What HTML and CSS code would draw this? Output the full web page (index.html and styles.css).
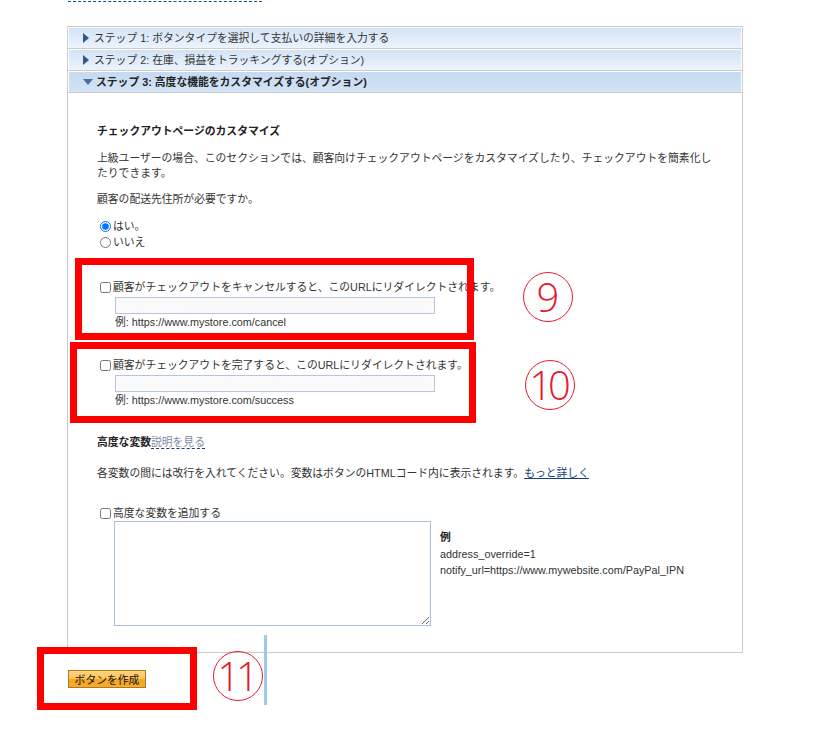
FILE: index.html
```html
<!DOCTYPE html>
<html lang="ja">
<head>
    <meta charset="UTF-8">
    <meta name="viewport" content="width=device-width, initial-scale=1.0">
    <title>ボタンの作成</title>
    <link rel="stylesheet" href="styles.css">
</head>
<body>
    <div class="page">
        <a href="#" class="top-link">保存済みのボタンを表示または編集する</a>

        <div class="accordion">
            <div class="step"><span class="arrow"></span>ステップ 1: ボタンタイプを選択して支払いの詳細を入力する</div>
            <div class="step"><span class="arrow"></span>ステップ 2: 在庫、損益をトラッキングする(オプション)</div>
            <div class="step open"><span class="arrow"></span>ステップ 3: 高度な機能をカスタマイズする(オプション)</div>

            <div class="panel">
                <h3 class="title">チェックアウトページのカスタマイズ</h3>
                <p class="text">上級ユーザーの場合、このセクションでは、顧客向けチェックアウトページをカスタマイズしたり、チェックアウトを簡素化したりできます。</p>
                <p class="text">顧客の配送先住所が必要ですか。</p>

                <div class="radios">
                    <label><input type="radio" name="ship" checked>はい。</label>
                    <label><input type="radio" name="ship">いいえ</label>
                </div>

                <div class="redirect">
                    <label><input type="checkbox">顧客がチェックアウトをキャンセルすると、このURLにリダイレクトされます。</label>
                    <input type="text" class="url">
                    <div class="hint">例: https://www.mystore.com/cancel</div>
                </div>

                <div class="redirect">
                    <label><input type="checkbox">顧客がチェックアウトを完了すると、このURLにリダイレクトされます。</label>
                    <input type="text" class="url">
                    <div class="hint">例: https://www.mystore.com/success</div>
                </div>

                <div class="vars-head"><strong>高度な変数</strong><a href="#" class="help">説明を見る</a></div>
                <p class="text vars-note">各変数の間には改行を入れてください。変数はボタンのHTMLコード内に表示されます。<a href="#" class="more">もっと詳しく</a></p>

                <label class="add-vars"><input type="checkbox">高度な変数を追加する</label>
                <div class="vars-row">
                    <textarea class="vars"></textarea>
                    <div class="vars-example">
                        <strong>例</strong>
                        <div>address_override=1</div>
                        <div>notify_url=https://www.mywebsite.com/PayPal_IPN</div>
                    </div>
                </div>
            </div>
        </div>

        <div class="actions">
            <button class="create">ボタンを作成</button>
        </div>

        <!-- annotations drawn over the screenshot -->
        <div class="mark mark-9"></div>
        <div class="mark mark-10"></div>
        <div class="mark mark-11"></div>
        <div class="num num-9">9</div>
        <div class="num num-10">10</div>
        <div class="num num-11">11</div>
        <div class="caret"></div>
    </div>
</body>
</html>
```

FILE: styles.css
```css
body {
    margin: 0;
    background: white;
    font-family: "Liberation Sans", "Noto Sans CJK JP", sans-serif;
    font-size: 10.8px;
    color: #333;
}
.page {
    position: relative;
    width: 825px;
    height: 732px;
    overflow: hidden;
    padding-left: 67px;
    box-sizing: border-box;
}
.top-link {
    display: block;
    width: fit-content;
    margin: -14px 0 0 1px;
    line-height: 15px;
    color: #1a4a8a;
    text-decoration: none;
    border-bottom: 1px dashed #1a4a8a;
}
.accordion {
    width: 676px;
    margin-top: 24px;
    border: 1px solid #ccc;
    box-sizing: border-box;
}
.step {
    height: 20px;
    line-height: 20px;
    padding-left: 14px;
    border: 1px solid white;
    border-bottom: none;
    box-shadow: 0 1px 0 #ccc;
    margin-bottom: 1px;
    background: linear-gradient(#d3e3f6, #ecf3fc);
    color: #333;
    display: flex;
    align-items: center;
}
.arrow {
    width: 0;
    height: 0;
    border-left: 6px solid #2e5a8a;
    border-top: 5px solid transparent;
    border-bottom: 5px solid transparent;
    margin-right: 5px;
}
.step.open {
    background: linear-gradient(#c5d9f1, #d3e3f5);
    font-weight: bold;
    color: #222;
}
.step.open .arrow {
    border-top: 6px solid #4a6f99;
    border-left: 5px solid transparent;
    border-right: 5px solid transparent;
    border-bottom: none;
    margin-right: 3px;
}
.panel {
    padding: 31px 24px 26px 29px;
    line-height: 15px;
}
.title {
    margin: 0 0 12px;
    font-size: 10.8px;
    font-weight: bold;
    color: #222;
}
.text {
    margin: 0 0 11px;
}
.radios {
    display: flex;
    flex-direction: column;
    margin-top: 11px;
}
.radios label {
    display: flex;
    align-items: center;
    height: 16px;
}
input[type="radio"],
input[type="checkbox"] {
    width: 11px;
    height: 11px;
    margin: 0 2px 0 3px;
}
.redirect {
    margin-top: 30px;
    display: flex;
    flex-direction: column;
    align-items: flex-start;
}
.redirect + .redirect {
    margin-top: 29px;
}
.redirect label,
.add-vars {
    display: flex;
    align-items: center;
    white-space: nowrap;
}
.url {
    width: 320px;
    height: 17px;
    box-sizing: border-box;
    margin: 2px 0 0 18px;
    border: 1px solid #b3c6dc;
    background: #fafafa;
}
.hint {
    margin: 1px 0 0 18px;
    line-height: 14px;
}
.vars-head {
    margin-top: 28px;
}
.vars-head strong {
    color: #222;
}
.help {
    color: #7b8ba3;
    text-decoration: none;
    border-bottom: 1px dashed #1a3c6e;
}
.vars-note {
    margin-top: 16px;
}
.more {
    color: #0e3d7a;
}
.add-vars {
    margin-top: 25px;
}
.vars-row {
    display: flex;
}
.vars {
    width: 317px;
    height: 105px;
    margin-left: 17px;
    border: 1px solid #a9c0d8;
    box-sizing: border-box;
    resize: both;
}
.vars-example {
    margin: 8px 0 0 9px;
    line-height: 16.5px;
}
.vars-example strong {
    color: #222;
}
.actions {
    padding: 17px 0 0 1px;
}
.create {
    width: 78px;
    height: 18px;
    padding: 0;
    font-family: inherit;
    font-size: 10.8px;
    color: #111;
    border: 1px solid #b07a20;
    background: linear-gradient(#ffd27e 0%, #ffc55c 50%, #f5a623 51%, #f7ab2c 100%);
}
.mark {
    position: absolute;
    border: 7px solid #ff0000;
}
.mark-9 { left: 75px; top: 258px; width: 385px; height: 68px; }
.mark-10 { left: 70px; top: 342px; width: 392px; height: 67px; }
.mark-11 { left: 37px; top: 647px; width: 146px; height: 49px; }
.num {
    position: absolute;
    width: 48px;
    height: 48px;
    border: 1.5px solid #e8192c;
    border-radius: 50%;
    color: #e8192c;
    font-family: "Open Sans", "Liberation Sans", sans-serif;
    font-weight: 300;
    font-size: 40px;
    line-height: 48px;
    text-align: center;
    letter-spacing: -4px;
    text-indent: -4px;
}
.num-9 { left: 523px; top: 272px; letter-spacing: 0; text-indent: 0; }
.num-10 { left: 525px; top: 360px; }
.num-11 { left: 213px; top: 651px; }
.caret {
    position: absolute;
    left: 264px;
    top: 635px;
    width: 3px;
    height: 70px;
    background: #a0c8ec;
}
```
